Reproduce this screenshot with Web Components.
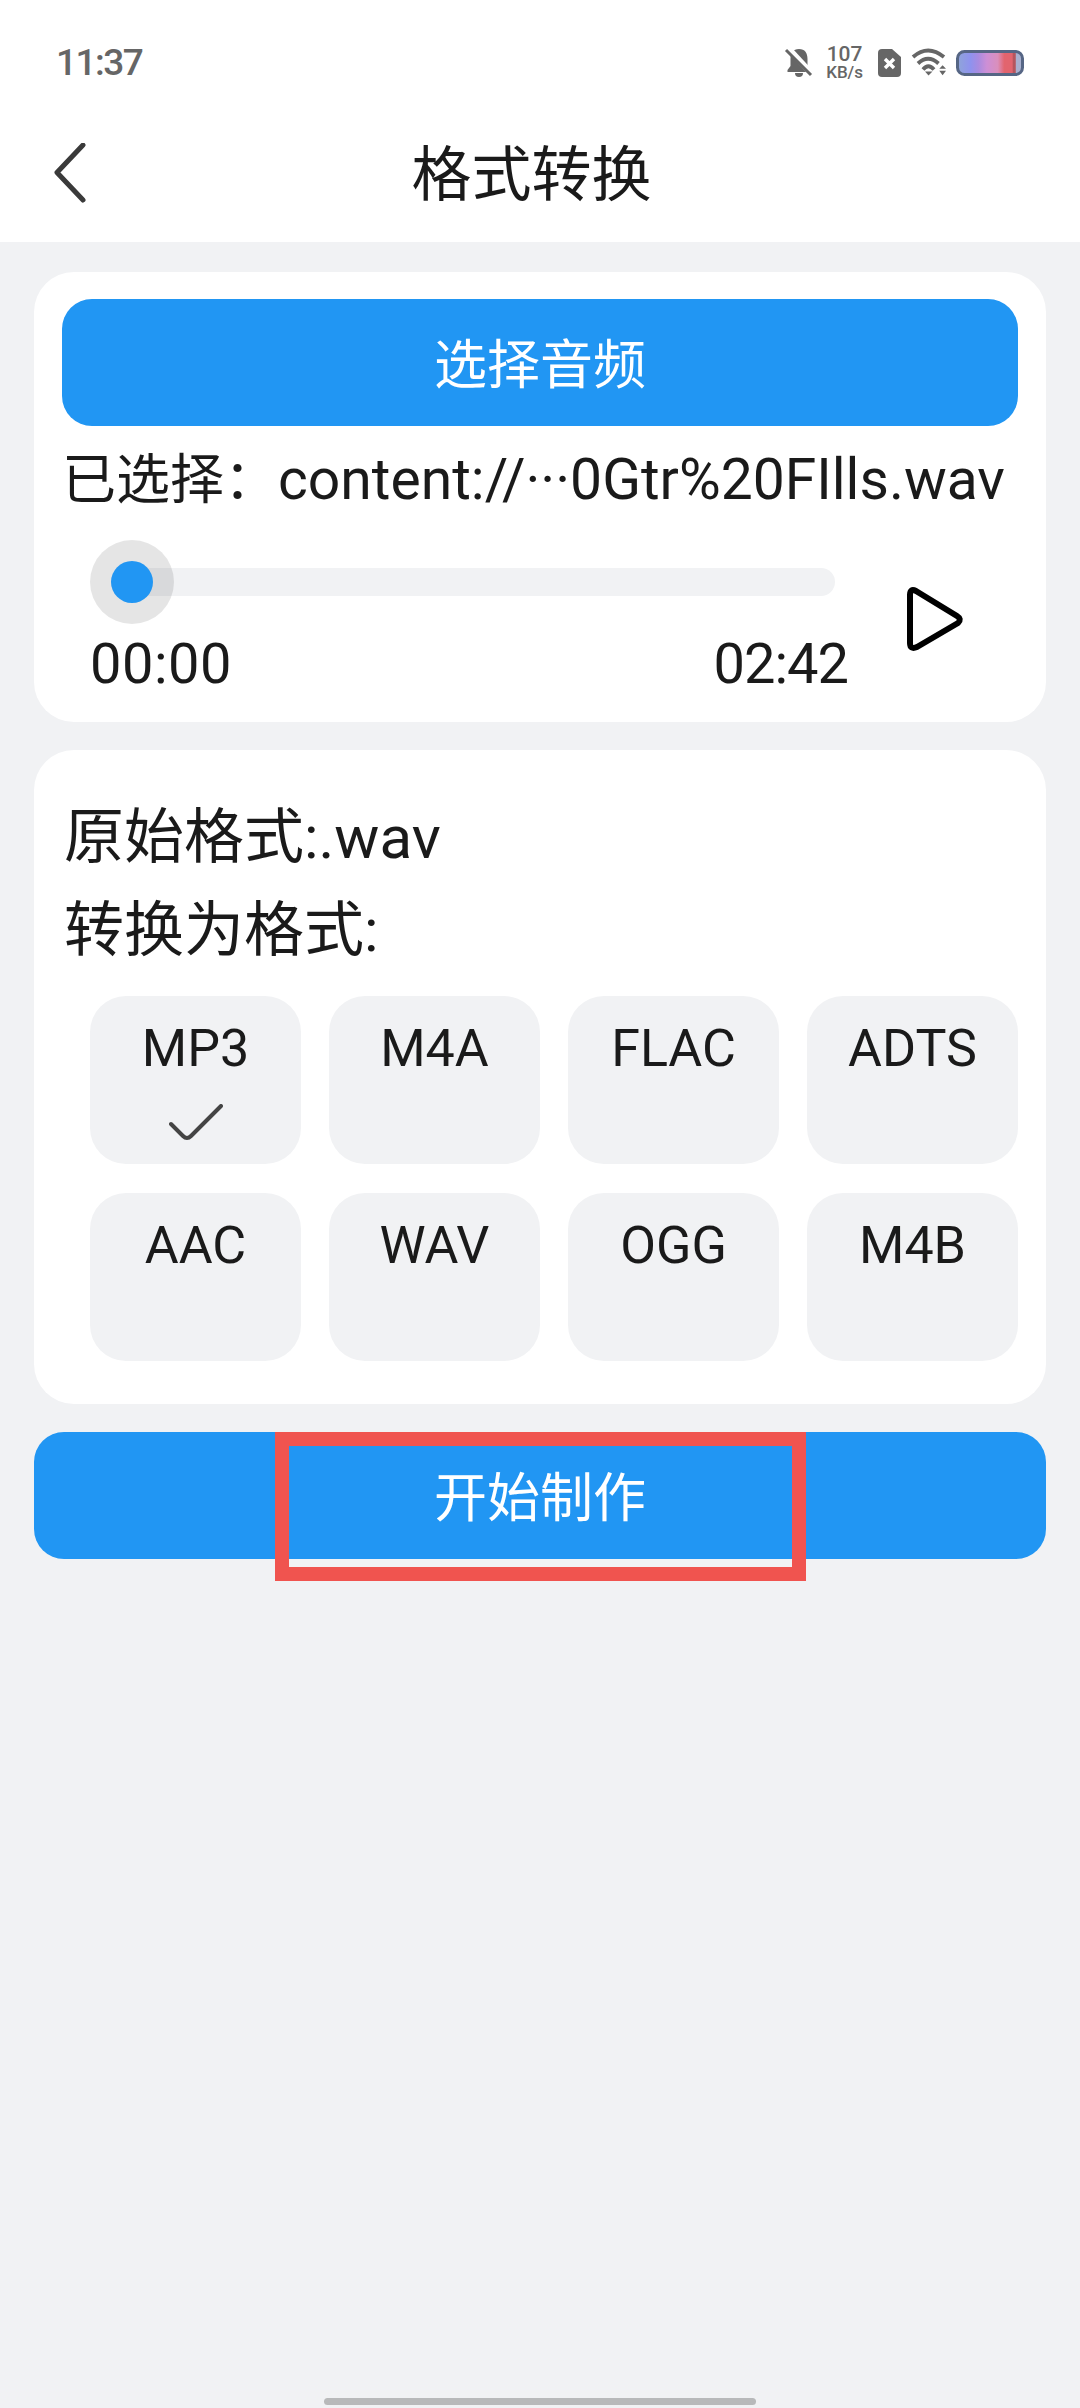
<!DOCTYPE html>
<html lang="zh">
<head>
<meta charset="utf-8">
<title>格式转换</title>
<style>
html, body { margin: 0; padding: 0; }
body {
  width: 1080px;
  height: 2408px;
  overflow: hidden;
  position: relative;
  background: #f1f2f4;
  color: #1a1a1a;
  font-family: Roboto, "Noto Sans CJK SC", sans-serif;
}
</style>
</head>
<body>
<status-bar></status-bar>
<nav-header>格式转换</nav-header>
<app-main>
  <player-card></player-card>
  <format-card>
    <format-tile checked>MP3</format-tile>
    <format-tile>M4A</format-tile>
    <format-tile>FLAC</format-tile>
    <format-tile>ADTS</format-tile>
    <format-tile>AAC</format-tile>
    <format-tile>WAV</format-tile>
    <format-tile>OGG</format-tile>
    <format-tile>M4B</format-tile>
  </format-card>
  <blue-button>开始制作</blue-button>
</app-main>
<mark-box></mark-box>
<home-bar></home-bar>

<script>
function shadow(el, html) {
  el.attachShadow({ mode: 'open' }).innerHTML = html;
}

class StatusBar extends HTMLElement {
  connectedCallback() {
    shadow(this, `
<style>
:host { display: flex; align-items: center; justify-content: space-between; height: 88px; padding: 38px 56px 0 56px; box-sizing: border-box; background: #fff; color: #666; }
.time { font-size: 37px; font-weight: 500; letter-spacing: -1.5px; line-height: 44px; margin-top: -1px; }
.icons { display: flex; align-items: center; }
svg { display: block; overflow: visible; }
.speed { display: flex; flex-direction: column; align-items: center; margin: 0 15px 0 14px; line-height: 18px; font-weight: 500; }
.speed b { font-size: 21px; font-weight: 500; }
.speed i { font-size: 17px; font-style: normal; }
</style>
<div class="time">11:37</div>
<div class="icons">
  <svg width="26" height="28" viewBox="0 0 26 28"><path d="M13 0c6 0 8.500 4 8.500 10v7l3 4v2H1.500v-2l3-4v-7C4.500 4 7 0 13 0z" fill="#666"/><path d="M9 24h8a4 4 0 0 1-8 0z" fill="#666"/><path d="M2 -1l24 26" stroke="#fff" stroke-width="6"/><path d="M0 1l25 25" stroke="#666" stroke-width="3"/></svg>
  <div class="speed"><b>107</b><i>KB/s</i></div>
  <svg width="23" height="28" viewBox="0 0 23 28"><path d="M4 0h10l9 8v16a4 4 0 0 1-4 4H4a4 4 0 0 1-4-4V4a4 4 0 0 1 4-4z" fill="#666"/><path d="M7 10l9 9M16 10l-9 9" stroke="#fff" stroke-width="3.400"/></svg>
  <svg style="margin-left:11px" width="34" height="26" viewBox="0 0 34 26"><g fill="none" stroke="#666" stroke-width="3.800"><path d="M1 7Q16 -6 32 7"/><path d="M6 13.500Q16 4 26.500 13.500"/><path d="M11 19.500Q16.300 13 22 19.500"/></g><path d="M13 21.500h7.500L16.500 25.500zM27.300 18.700l3.300-3.400 3.400 3.400zM27.300 20.700H34l-3.400 4.600z" fill="#666"/></svg>
  <svg style="margin-left:10px" width="68" height="26" viewBox="0 0 68 26"><defs><linearGradient id="b"><stop offset="0" stop-color="#8fa5d8"/><stop offset=".2" stop-color="#8f92ee"/><stop offset=".32" stop-color="#a88be0"/><stop offset=".45" stop-color="#cd8fd6"/><stop offset=".62" stop-color="#da8fbc"/><stop offset=".72" stop-color="#e2646e"/><stop offset=".84" stop-color="#e2646e"/><stop offset=".86" stop-color="#b5565e"/><stop offset=".89" stop-color="#b5565e"/><stop offset=".9" stop-color="#a9b0cf"/><stop offset="1" stop-color="#a9b0cf"/></linearGradient></defs><rect x="1.500" y="1.500" width="65" height="23" rx="7" fill="url(#b)" stroke="#566685" stroke-width="3"/></svg>
</div>`);
  }
}

class NavHeader extends HTMLElement {
  connectedCallback() {
    shadow(this, `
<style>
:host { display: flex; align-items: center; height: 154px; padding: 0 0 0 54px; box-sizing: border-box; background: #fff; position: relative; }
svg { display: block; margin-top: 16px; flex: none; }
.title { flex: 1; text-align: center; margin: 10px 0 0 -71px; padding-right: 32px; font: 400 60px/80px "Noto Sans CJK SC", sans-serif; color: #1a1a1a; }
</style>
<svg width="32" height="60" viewBox="0 0 32 60"><path d="M29 2L3 29.500 29 57" fill="none" stroke="#3a3a3a" stroke-width="5" stroke-linecap="round" stroke-linejoin="round"/></svg>
<div class="title"><slot></slot></div>`);
  }
}

class AppMain extends HTMLElement {
  connectedCallback() {
    shadow(this, `
<style>
:host { display: flex; flex-direction: column; gap: 28px; padding: 30px 34px 0; }
</style>
<slot></slot>`);
  }
}

class BlueButton extends HTMLElement {
  connectedCallback() {
    shadow(this, `
<style>
:host { display: flex; align-items: center; justify-content: center; height: 127px; padding-bottom: 3px; box-sizing: border-box; border-radius: 30px; background: #2196f3; color: #fff; font: 400 53px/1 "Noto Sans CJK SC", sans-serif; }
</style>
<slot></slot>`);
  }
}

class PlayerCard extends HTMLElement {
  connectedCallback() {
    shadow(this, `
<style>
:host { display: block; height: 450px; padding: 27px 28px 0; box-sizing: border-box; background: #fff; border-radius: 40px; }
.file { height: 74px; margin: 15px 0 0 0; font: 400 54px/70px "Noto Sans CJK SC", sans-serif; white-space: nowrap; }
.file span { font: 400 57px/70px Roboto, sans-serif; }
.row { display: flex; margin-top: 25px; }
.seek { width: 758px; margin-left: 28px; }
.track { height: 84px; position: relative; display: flex; align-items: center; }
.bar { flex: 1; height: 28px; margin: 0 13px 0 21px; border-radius: 14px; background: #f1f2f4; }
.halo { position: absolute; left: 0; top: 0; width: 84px; height: 84px; border-radius: 50%; background: rgba(0,0,0,.1); display: flex; align-items: center; justify-content: center; }
.dot { width: 42px; height: 42px; border-radius: 50%; background: #2196f3; }
.times { display: flex; justify-content: space-between; margin-top: 7px; font: 400 56px/66px Roboto, sans-serif; letter-spacing: .5px; }
.times span + span { letter-spacing: -1px; }
svg { display: block; margin: 46px 0 0 58px; flex: none; }
</style>
<blue-button>选择音频</blue-button>
<div class="file">已选择：<span>content://···0Gtr%20FIlls.wav</span></div>
<div class="row">
  <div class="seek">
    <div class="track"><div class="bar"></div><div class="halo"><div class="dot"></div></div></div>
    <div class="times"><span>00:00</span><span>02:42</span></div>
  </div>
  <svg width="58" height="66" viewBox="0 0 58 66"><path d="M10 5 L51 30 Q56 33 52 37 L11 61 Q4 64 4 57 L4 9 Q4 2 10 5z" fill="none" stroke="#000" stroke-width="6" stroke-linejoin="round"/></svg>
</div>`);
  }
}

class FormatCard extends HTMLElement {
  connectedCallback() {
    shadow(this, `
<style>
:host { display: block; height: 654px; padding: 41px 28px 0; box-sizing: border-box; background: #fff; border-radius: 40px; }
.line { margin-left: 2px; font: 400 60px/93px Roboto, "Noto Sans CJK SC", sans-serif; }
.grid { display: grid; grid-template-columns: repeat(4, 211px); grid-auto-rows: 168px; gap: 29px 28px; margin: 19px 0 0 28px; }
</style>
<div class="line">原始格式:.wav</div>
<div class="line">转换为格式:</div>
<div class="grid"><slot></slot></div>`);
  }
}

class FormatTile extends HTMLElement {
  connectedCallback() {
    const check = this.hasAttribute('checked')
      ? '<svg width="54" height="38" viewBox="0 0 54 38"><path d="M2 20L14 32Q18 36 22 32L52 2" fill="none" stroke="#444" stroke-width="4" stroke-linecap="round"/></svg>'
      : '';
    shadow(this, `
<style>
:host { display: flex; flex-direction: column; align-items: center; border-radius: 36px; background: #f1f2f4; font: 400 52px/62px Roboto, sans-serif; color: #1a1a1a; }
.label { margin-top: 22px; }
svg { display: block; margin: 24px 0 0 0; }
</style>
<div class="label"><slot></slot></div>${check}`);
  }
}

class MarkBox extends HTMLElement {
  connectedCallback() {
    shadow(this, `
<style>
:host { position: absolute; left: 275px; top: 1432px; width: 531px; height: 149px; box-sizing: border-box; border: 14px solid #f0544f; }
</style>`);
  }
}

class HomeBar extends HTMLElement {
  connectedCallback() {
    shadow(this, `
<style>
:host { position: absolute; left: 324px; top: 2398px; width: 432px; height: 7px; border-radius: 4px; background: #b8b9ba; }
</style>`);
  }
}

customElements.define('status-bar', StatusBar);
customElements.define('nav-header', NavHeader);
customElements.define('app-main', AppMain);
customElements.define('blue-button', BlueButton);
customElements.define('player-card', PlayerCard);
customElements.define('format-card', FormatCard);
customElements.define('format-tile', FormatTile);
customElements.define('mark-box', MarkBox);
customElements.define('home-bar', HomeBar);
</script>
</body>
</html>
